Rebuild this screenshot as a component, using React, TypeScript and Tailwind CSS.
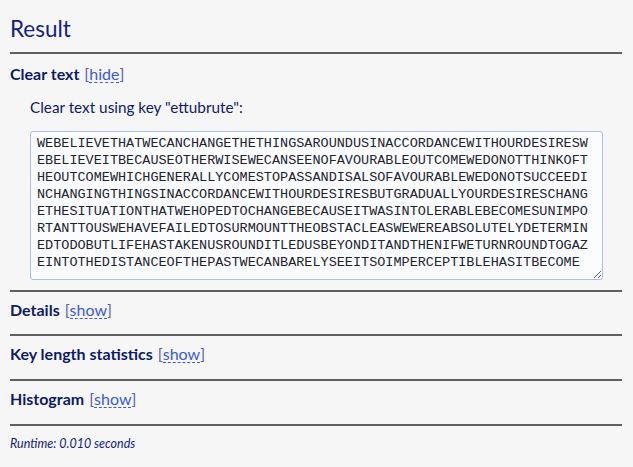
import React from 'react';

const clearText = [
  'WEBELIEVETHATWECANCHANGETHETHINGSAROUNDUSINACCORDANCEWITHOURDESIRESW',
  'EBELIEVEITBECAUSEOTHERWISEWECANSEENOFAVOURABLEOUTCOMEWEDONOTTHINKOFT',
  'HEOUTCOMEWHICHGENERALLYCOMESTOPASSANDISALSOFAVOURABLEWEDONOTSUCCEEDI',
  'NCHANGINGTHINGSINACCORDANCEWITHOURDESIRESBUTGRADUALLYOURDESIRESCHANG',
  'ETHESITUATIONTHATWEHOPEDTOCHANGEBECAUSEITWASINTOLERABLEBECOMESUNIMPO',
  'RTANTTOUSWEHAVEFAILEDTOSURMOUNTTHEOBSTACLEASWEWEREABSOLUTELYDETERMIN',
  'EDTODOBUTLIFEHASTAKENUSROUNDITLEDUSBEYONDITANDTHENIFWETURNROUNDTOGAZ',
  'EINTOTHEDISTANCEOFTHEPASTWECANBARELYSEEITSOIMPERCEPTIBLEHASITBECOME',
].join('\n');

const Toggle = ({ label }: { label: string }) => (
  <span className="ml-[5px] font-normal text-[#5a5fb0]">
    [<span className="text-[#3b5bd6] border-b border-dashed border-[#3b5bd6] leading-[17px] inline-block">{label}</span>]
  </span>
);

const Section = ({ title, toggle, tight }: { title: string; toggle: string; tight?: boolean }) => (
  <div className={tight ? 'border-t-2 border-[#5f5f5f] pt-[6px] pb-[13px]' : 'border-t-2 border-[#5f5f5f] pt-[6px] pb-[14px]'}>
    <h3 className="text-[16px] leading-[23px] font-bold text-[#0e1a66]">
      {title}
      <Toggle label={toggle} />
    </h3>
  </div>
);

export default function App() {
  return (
    <div
      className="min-h-[467px] w-[633px] bg-[#f6f6f6] text-[#0e1a66] pl-[10px] pr-[11px] pt-[14px]"
      style={{ fontFamily: 'Lato, "Noto Sans", sans-serif' }}
    >
      <h2 className="text-[22.5px] leading-[30px] font-normal text-[#14237e] pb-[8px] border-b-2 border-[#5f5f5f]">
        Result
      </h2>

      <div className="pt-[8px] pb-[10px]">
        <h3 className="text-[16px] leading-[23px] font-bold">
          Clear text
          <Toggle label="hide" />
        </h3>
        <div className="pl-[20px] pt-[11px]">
          <p className="text-[15.3px] leading-[22px]">Clear text using key "ettubrute":</p>
          <textarea
            readOnly
            defaultValue={clearText}
            wrap="off"
            className="mt-[13px] block w-[573px] h-[149px] rounded-[3px] border border-[#a9bdf0] bg-[#fbfcff] px-[6px] pt-[3px] text-[13.5px] leading-[17px] text-[#22232e] overflow-hidden outline-none"
            style={{ fontFamily: '"Liberation Mono", monospace' }}
          />
        </div>
      </div>

      <Section title="Details" toggle="show" tight />
      <Section title="Key length statistics" toggle="show" />
      <Section title="Histogram" toggle="show" />

      <div className="border-t-2 border-[#5f5f5f] pt-[10px]">
        <p className="text-[12.5px] italic leading-[16px] text-[#14237e]">Runtime: 0.010 seconds</p>
      </div>
    </div>
  );
}
